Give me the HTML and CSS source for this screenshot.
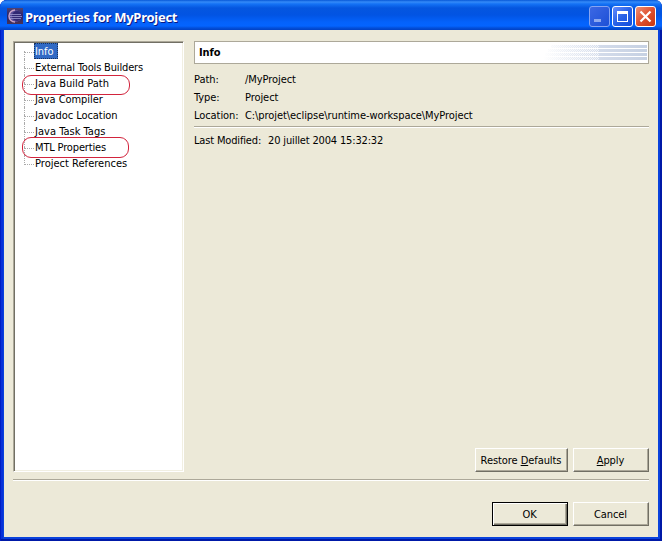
FILE: index.html
```
<!DOCTYPE html>
<html lang="en">
<head>
<meta charset="utf-8">
<title>Properties for MyProject</title>
<link rel="stylesheet" href="styles.css">
</head>
<body>
<div class="window">
  <header class="titlebar">
    <svg class="app-icon" width="16" height="16" viewBox="0 0 16 16">
      <defs><linearGradient id="sky" x2="0" y2="1"><stop stop-color="#51426f"/><stop offset=".5" stop-color="#26236d"/><stop offset="1" stop-color="#493356"/></linearGradient></defs>
      <path fill="url(#sky)" d="M0 0h16v16H0z"/>
      <circle cx="8.5" cy="8" r="6" fill="#5a4d99"/>
      <path d="M8 2a6 6 0 0 0 0 12" fill="none" stroke="#c9a3c9" stroke-width="1.5"/>
      <circle cx="10" cy="8" r="5" fill="#302773"/>
      <path d="M3 6.5h11M2 8.5h13M3 10.5h11" stroke="#9d98d0" stroke-width=".8"/>
    </svg>
    <h1 class="title">Properties for MyProject</h1>
    <div class="controls">
      <span class="control disabled"><svg width="21" height="21"><path fill="#8ea9ef" d="M5 13h7v3H5z"/></svg></span>
      <span class="control"><svg width="21" height="21"><path fill="#fff" fill-rule="evenodd" d="M5 5h11v11H5zm1 3v7h9V8z"/></svg></span>
      <span class="control close"><svg width="21" height="21"><path fill="none" stroke="#fff" stroke-width="2.2" d="M5.5 5.5l10 10m0-10l-10 10"/></svg></span>
    </div>
  </header>
  <main class="body">
    <div class="columns">
      <ul class="tree">
        <li><span class="label selected">Info</span></li>
        <li><span class="label snug">External Tools Builders</span></li>
        <li><span class="label loose">Java Build Path</span><i class="mark"></i></li>
        <li><span class="label">Java Compiler</span></li>
        <li><span class="label">Javadoc Location</span></li>
        <li><span class="label loose">Java Task Tags</span></li>
        <li><span class="label snug">MTL Properties</span><i class="mark mtl"></i></li>
        <li><span class="label loose">Project References</span></li>
      </ul>
      <section class="page">
        <div class="banner"><h2>Info</h2>
          <svg class="stripes" width="104" height="19">
            <defs>
              <linearGradient id="fade"><stop stop-color="#ccd6e8" stop-opacity="0"/><stop offset=".55" stop-color="#d3dbea"/><stop offset="1" stop-color="#c6d1e3"/></linearGradient>
              <pattern id="dots" width="2" height="2" patternUnits="userSpaceOnUse"><path fill="#fff" fill-opacity=".7" d="M0 0h1v1H0zM1 1h1v1H1z"/></pattern>
            </defs>
            <path fill="url(#fade)" d="M8 2h96v3H8zM5 6h99v3H5zM2 10h102v3H2zM0 14h104v3H0z"/>
            <path fill="url(#dots)" d="M0 0h56v19H0z"/>
          </svg>
        </div>
        <dl class="facts">
          <dt>Path:</dt><dd>/MyProject</dd>
          <dt>Type:</dt><dd>Project</dd>
          <dt>Location:</dt><dd>C:\projet\eclipse\runtime-workspace\MyProject</dd>
        </dl>
        <div class="rule"></div>
        <div class="modified"><span class="snug">Last Modified:</span><span class="snug">20 juillet 2004 15:32:32</span></div>
        <div class="actions">
          <button class="btn wide"><span>Restore <u>D</u>efaults</span></button>
          <button class="btn"><span><u>A</u>pply</span></button>
        </div>
      </section>
    </div>
    <div class="rule"></div>
    <footer class="actions footer">
      <button class="btn default">OK</button>
      <button class="btn">Cancel</button>
    </footer>
  </main>
</div>
</body>
</html>
```
FILE: styles.css
```
* { box-sizing: border-box; }
body { margin: 0; background: #fff; overflow: hidden; font: 11px/16px "DejaVu Sans Condensed", "DejaVu Sans", sans-serif; font-stretch: condensed; letter-spacing: -0.07px; color: #000; }
h1, h2, ul, dl, dd { margin: 0; padding: 0; }
.snug { letter-spacing: -0.16px; }
.loose { letter-spacing: 0.02px; }
.window { width: 662px; height: 541px; display: flex; flex-direction: column; padding: 0 4px 4px; border-radius: 7px 7px 0 0; background: #0a42dc; box-shadow: inset 1px 0 #001ec5, inset -2px -2px #0019a7, inset 3px 0 #0831d9; }
.titlebar { height: 30px; margin: 0 -4px; padding: 2px 6px 0 7px; display: flex; align-items: center; border-radius: 7px 7px 0 0; background: linear-gradient(#0758d7 0, #358bf8 2px, #1472f5 4px, #0556df 8px, #0254e3 15px, #0462fb 22px, #0464ff 26px, #034fd9 28px, #0041c5 30px); }
.app-icon { flex: none; }
.title { flex: 1; margin-left: 2px; padding-top: 1px; font: bold 13px/18px "Noto Sans", sans-serif; letter-spacing: -0.26px; color: #fff; text-shadow: 1px 1px #0a1883; white-space: nowrap; }
.controls { display: flex; gap: 2px; }
.control { width: 21px; height: 21px; border: 1px solid #fff; border-radius: 3px; background: linear-gradient(135deg, #668dff, #2861e6 50%, #124ddd); }
.control svg { display: block; margin: -1px; }
.control.disabled { border-color: #86a4f2; background: linear-gradient(135deg, #3c68e4, #1d50d6); }
.control.close { background: linear-gradient(135deg, #ef9175, #df5030 50%, #c7360e); }
.body { flex: 1; padding: 11px 9px; background: #ece9d8; }
.columns { display: flex; gap: 10px; height: 431px; margin-bottom: 7px; }
.tree { width: 171px; padding-top: 1px; list-style: none; background: #fff; border: 1px solid #fff; border-top-color: #aca899; border-left-color: #aca899; box-shadow: inset 1px 1px #716f64, inset -1px -1px #f1efe2; }
.tree li { position: relative; display: flex; height: 16px; padding-left: 20px; white-space: nowrap; }
.tree li::before { content: ""; position: absolute; left: 10px; top: 0; width: 9px; height: 9px; border: dotted #aaa; border-width: 0 0 1px 1px; }
.tree li:not(:last-child)::after { content: ""; position: absolute; left: 10px; top: 8px; height: 8px; border-left: 1px dotted #aaa; }
.tree li:first-child::before { border-left-color: transparent; }
.label { height: 16px; padding: 1px 1px 0; }
.selected { width: 24px; color: #fff; background: #316ac5; outline: 1px dotted #17335f; outline-offset: -1px; }
.mark { position: absolute; z-index: 1; left: 8px; top: 0; width: 108px; height: 20px; border: 1px solid #d2243d; border-radius: 9px; }
.mark.mtl { top: -2px; width: 107px; height: 21px; }
.page { width: 455px; display: flex; flex-direction: column; }
.banner { height: 23px; flex: none; display: flex; align-items: center; justify-content: space-between; padding: 0 1px 0 4px; border: 1px solid #aca899; background: #fff; }
h2 { padding-top: 1px; font: bold 11px/16px "DejaVu Sans Condensed", sans-serif; font-stretch: condensed; }
.facts { display: grid; grid-template-columns: 51px 1fr; grid-auto-rows: 18px; line-height: 18px; padding-top: 7px; margin-bottom: 1px; white-space: nowrap; }
.rule { height: 2px; flex: none; background: #aca899; border-bottom: 1px solid #fff; }
.modified { display: flex; gap: 7px; margin-top: 5px; white-space: nowrap; }
.actions { display: flex; justify-content: flex-end; gap: 5px; margin-top: auto; }
.footer { margin-top: 21px; }
.btn { width: 76px; height: 24px; padding: 1px 1px 0 0; border: 1px solid; border-color: #fff #716f64 #716f64 #fff; background: #ece9d8; box-shadow: inset -1px -1px #aca899; font: inherit; letter-spacing: inherit; color: #000; white-space: nowrap; }
.btn.wide { width: 93px; }
.btn.default { border-color: #000; box-shadow: inset 1px 1px #fff, inset -1px -1px #716f64, inset -2px -2px #aca899; }
```
